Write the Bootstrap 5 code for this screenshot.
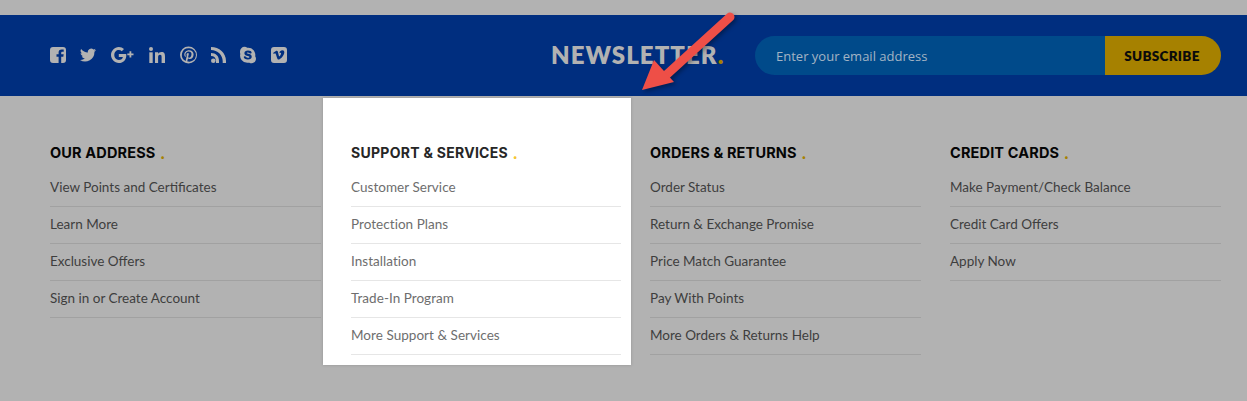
<!DOCTYPE html>
<html lang="en">
<head>
    <meta charset="UTF-8">
    <meta name="viewport" content="width=device-width, initial-scale=1.0">
    <title>Footer</title>
    <link href="https://cdn.jsdelivr.net/npm/bootstrap@5.3.2/dist/css/bootstrap.min.css" rel="stylesheet">
    <style>
        body { background: #b2b2b2; height: 401px; overflow: hidden; position: relative; }
        .news-band { margin-top: 15px; height: 81px; background: #002e7f; padding: 0 26px 0 50px; }
        .social-links { gap: 14.4px; width: 501px; margin-top: -2px; }
        .social-links svg { display: block; height: 18px; fill: #b2b2b2; }
        .news-title { font: 800 24px/1 Lato, sans-serif; color: #b2b2b2; width: 204px; letter-spacing: 1.05px; margin-top: -1px; }
        .gold-dot { color: #a68100; }
        .news-form { width: 466px; height: 39px; border-radius: 20px; overflow: hidden; }
        .news-form .form-control { background: #004a8a; border: 0; border-radius: 0; height: 39px; padding-left: 21px; font: 400 13px "Open Sans", sans-serif; box-shadow: none; }
        .news-form .form-control::placeholder { color: #a3b4c4; opacity: 1; }
        .news-form .btn { width: 116px; flex: none; background: #a68100; border: 0; border-radius: 0; color: #0b0b0b; font: 800 13.5px Lato, sans-serif; letter-spacing: .3px; padding: 0 2px 0 0; }
        .link-cols { padding: 44px 0 0 50px; gap: 29px; }
        .link-col { width: 271px; position: relative; }
        .link-col.spot::before { content: ""; position: absolute; left: -27px; top: -42px; width: 308px; height: 267px; background: #fff; box-shadow: 0 0 3px rgba(0,0,0,.18); }
        .link-col > * { position: relative; }
        .col-title { font: 700 14.5px/24px Inter, sans-serif; color: #050505; margin: 0 0 5px; text-transform: uppercase; letter-spacing: .15px; }
        .spot .col-title { color: #262626; font-size: 14px; letter-spacing: .28px; margin-left: 1px; }
        .col-title span { color: #a68100; font-size: 16px; margin-left: 1px; position: relative; top: 1px; }
        .spot .col-title span { color: #f5c632; }
        .col-links { list-style: none; margin: 0; padding: 0; }
        .col-links li { height: 37px; border-bottom: 1px solid #a1a1a1; font: 400 13.5px/35px Lato, sans-serif; color: #3e3e3e; }
        .spot .col-links { margin-left: 1px; }
        .spot .col-links li { border-color: #e6e6e6; color: #6e6e6e; letter-spacing: .04px; }
        .red-arrow { position: absolute; left: 635px; top: 5px; filter: drop-shadow(2px 2px 2px rgba(0,0,0,.35)); }
    </style>
</head>
<body>
    <div class="news-band d-flex align-items-center">
        <div class="social-links d-flex align-items-center">
            <svg viewBox="0 0 16 18" width="16"><path fill-rule="evenodd" d="M3 1h10a3 3 0 0 1 3 3v10a3 3 0 0 1-3 3h-1.800v-6.200h2.100l.4-2.500h-2.500V6.900c0-.8.3-1.200 1.200-1.200h1.300V3.500h-2c-2.200 0-3.100 1.300-3.100 3.100v1.700H6.500v2.500h2.100V17H3a3 3 0 0 1-3-3V4a3 3 0 0 1 3-3z"/></svg>
            <svg viewBox="0 0 17 18" width="16"><path d="M17 3.600c-.6.300-1.300.5-2 .6.700-.4 1.300-1.100 1.500-1.900-.7.400-1.400.7-2.200.8A3.500 3.500 0 0 0 8.400 6.300 9.900 9.900 0 0 1 1.200 2.600a3.500 3.500 0 0 0 1.100 4.700c-.6 0-1.100-.2-1.600-.4 0 1.700 1.200 3.100 2.800 3.400-.5.100-1 .2-1.600.1.500 1.400 1.700 2.400 3.300 2.400A7 7 0 0 1 0 14.300 9.900 9.900 0 0 0 15.300 5.500c.7-.5 1.300-1.100 1.700-1.900z"/></svg>
            <svg viewBox="0 0 24 18" width="24"><path d="M7.800 8v2.900h4.100c-.3 1.700-1.800 3-4.100 3-2.500 0-4.500-2.100-4.500-4.900s2-4.900 4.500-4.900c1.200 0 2.200.4 3 1.200l2.200-2.200A7.300 7.300 0 0 0 7.800 1C3.500 1 0 5 0 9s3.500 8 7.800 8c4.500 0 7.500-3.200 7.500-7.600 0-.5 0-1-.1-1.400H7.800z"/><path d="M20.300 7.500V5.300h-1.800v2.200h-2.200v1.800h2.200v2.200h1.800V9.300h2.200V7.500z"/></svg>
            <svg viewBox="0 0 16 18" width="16"><path d="M.3 6.300h3.400V17H.3z"/><circle cx="2" cy="2.900" r="2"/><path d="M6 6.300h3.200v1.500c.5-.9 1.700-1.800 3.300-1.800 3 0 3.500 2 3.500 4.600V17h-3.400v-5.500c0-1.300 0-2.700-1.600-2.700s-1.900 1.300-1.900 2.600V17H6z"/></svg>
            <svg viewBox="0 0 17 18" width="17"><path fill-rule="evenodd" d="M8.500.5a8.500 8.500 0 1 1 0 17 8.500 8.500 0 0 1 0-17zm0 1.800a6.700 6.700 0 0 0-2.700 12.800c0-.5 0-1.100.1-1.600l.9-3.700s-.2-.5-.2-1.100c0-1 .6-1.800 1.300-1.800.6 0 .9.500.9 1 0 .7-.4 1.600-.6 2.500-.2.700.4 1.300 1.100 1.300 1.300 0 2.200-1.700 2.200-3.600 0-1.500-1-2.600-2.800-2.600-2 0-3.300 1.500-3.300 3.200 0 .6.200 1 .5 1.300l-.3 1c-.8-.4-1.300-1.200-1.300-2.400 0-2 1.700-4.300 4.900-4.300 2.700 0 4.400 1.900 4.400 4 0 2.700-1.500 4.800-3.800 4.800-.8 0-1.500-.4-1.700-.9l-.5 1.800c-.1.500-.3.900-.5 1.300A6.700 6.700 0 1 0 8.500 2.300z"/></svg>
            <svg viewBox="0 0 15 18" width="15"><circle cx="2.300" cy="14.700" r="2.300"/><path d="M0 6.900v3.100c3.100 0 5 1.900 5 5V17h3v-2C8 10 5 6.900 0 6.900z"/><path d="M0 1v3c6.700 0 11.700 5.300 11.700 11v2H15v-2C15 7 8.300 1 0 1z"/></svg>
            <svg viewBox="0 0 16 18" width="16"><path fill-rule="evenodd" d="M4.600.8c1 0 1.900.4 2.600 1h.8a7.100 7.100 0 0 1 7.200 8.400c.5.800.8 1.700.8 2.500a4.500 4.500 0 0 1-6.600 4c-.7.100-1.500.1-2.300 0A7.100 7.100 0 0 1 .3 7.900C0 7.200 0 6.300 0 5.400A4.600 4.600 0 0 1 4.600.8zM8 4.600c-2.200 0-3.600 1.100-3.600 2.700 0 3.100 5 2.200 5 3.600 0 .5-.6.900-1.500.9-1.800 0-1.800-1.500-3.100-1.500-.6 0-1 .4-1 1 0 1 1.600 2.200 4.100 2.200 2.400 0 3.800-1.100 3.800-2.800 0-3.300-5-2.400-5-3.600 0-.4.500-.7 1.200-.7 1.400 0 1.500 1.100 2.700 1.100.6 0 1-.4 1-1C11.600 5.600 10.200 4.600 8 4.600z"/></svg>
            <svg viewBox="0 0 16 18" width="16"><path fill-rule="evenodd" d="M3 1h10a3 3 0 0 1 3 3v10a3 3 0 0 1-3 3H3a3 3 0 0 1-3-3V4a3 3 0 0 1 3-3zm10.300 5.700c.1-1.700-.6-2.500-2-2.500-1.300 0-2.600 1-3 2.800.8-.4 1.700-.5 1.800.3.100.8-1.100 3-1.700 3-.7 0-1-3.300-1.600-4.800-.5-1.300-1.700-1.200-3.800.8l-.8.8.6.8c.6-.4 1-.7 1.300-.7.800 0 1.300 3 2.200 5.200.6 1.400 1.400 1.500 2.600.7 2.400-1.800 4.200-4.500 4.400-6.400z"/></svg>
        </div>
        <div class="news-title">NEWSLETTER<span class="gold-dot">.</span></div>
        <form class="news-form input-group flex-nowrap">
            <input class="form-control" type="email" placeholder="Enter your email address">
            <button class="btn" type="button">SUBSCRIBE</button>
        </form>
    </div>

    <div class="link-cols d-flex">
        <div class="link-col">
            <h6 class="col-title">Our Address <span>.</span></h6>
            <ul class="col-links">
                <li>View Points and Certificates</li>
                <li>Learn More</li>
                <li>Exclusive Offers</li>
                <li>Sign in or Create Account</li>
            </ul>
        </div>
        <div class="link-col spot">
            <h6 class="col-title">Support &amp; Services <span>.</span></h6>
            <ul class="col-links">
                <li>Customer Service</li>
                <li>Protection Plans</li>
                <li>Installation</li>
                <li>Trade-In Program</li>
                <li>More Support &amp; Services</li>
            </ul>
        </div>
        <div class="link-col">
            <h6 class="col-title">Orders &amp; Returns <span>.</span></h6>
            <ul class="col-links">
                <li>Order Status</li>
                <li>Return &amp; Exchange Promise</li>
                <li>Price Match Guarantee</li>
                <li>Pay With Points</li>
                <li>More Orders &amp; Returns Help</li>
            </ul>
        </div>
        <div class="link-col">
            <h6 class="col-title">Credit Cards <span>.</span></h6>
            <ul class="col-links">
                <li>Make Payment/Check Balance</li>
                <li>Credit Card Offers</li>
                <li>Apply Now</li>
            </ul>
        </div>
    </div>

    <!-- annotation arrow over the band -->
    <svg class="red-arrow" width="110" height="95" viewBox="0 0 110 95">
        <path d="M95 12 L29 72" stroke="#ee4f47" stroke-width="9" stroke-linecap="round" fill="none"/>
        <path d="M7 85 L19 55 L39 77 Z" fill="#ee4f47"/>
    </svg>
    <script src="https://cdn.jsdelivr.net/npm/bootstrap@5.3.2/dist/js/bootstrap.bundle.min.js"></script>
</body>
</html>
